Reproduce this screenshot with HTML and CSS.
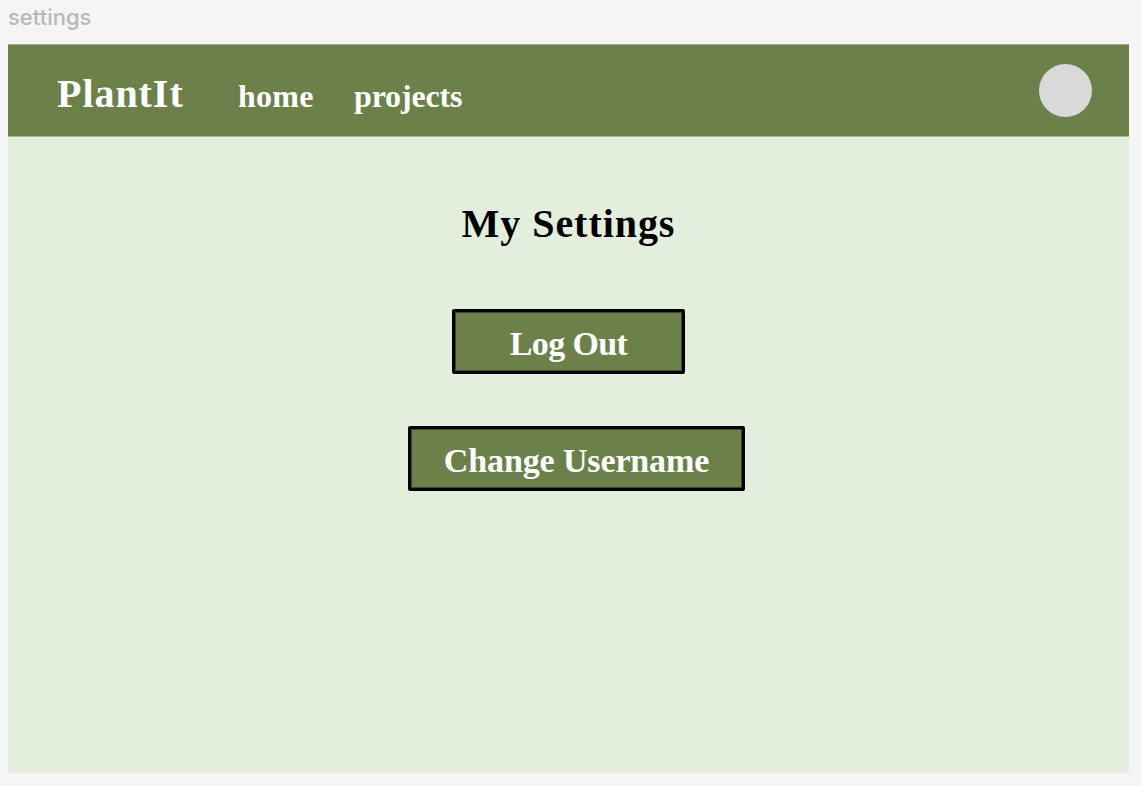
FILE: index.html
```
<!DOCTYPE html>
<html lang="en">
<head>
<meta charset="utf-8">
<title>PlantIt settings</title>
<link rel="stylesheet" href="styles.css">
</head>
<body>
<div class="frame-label">settings</div>
<div class="screen">
  <header class="navbar">
    <a class="brand">PlantIt</a>
    <nav class="links"><a class="home">home</a><a class="projects">projects</a></nav>
    <div class="avatar"></div>
  </header>
  <main class="content">
    <h1 class="title">My Settings</h1>
    <button class="button logout">Log Out</button>
    <button class="button username">Change Username</button>
  </main>
</div>
</body>
</html>
```
FILE: styles.css
```
* { box-sizing: border-box; }
body {
  margin: 0;
  height: 786px;
  padding: 0 13px 13px 8px;
  overflow: hidden;
  background: #f5f5f5;
  font-family: "Liberation Serif", serif;
  font-weight: 700;
}
.frame-label {
  height: 44px;
  padding-top: 4px;
  font: 500 22px/27px Inter, sans-serif;
  color: #b8b8b8;
}
.screen { height: 729px; background: #e3eedd; }
.navbar {
  display: flex;
  height: 93px;
  padding: 0 37px 0 49px;
  background: #6b8149;
  border-top: 1px solid #a0ad89;
  border-bottom: 1px solid #a7b893;
  color: #fff;
  white-space: nowrap;
}
.brand { width: 181px; padding-top: 26px; font-size: 40px; line-height: 46px; letter-spacing: 0.95px; }
.links { display: flex; flex: 1; padding-top: 32px; font-size: 32px; line-height: 38px; }
.home { width: 116px; letter-spacing: 0.25px; }
.projects { letter-spacing: -0.15px; }
.avatar { width: 53px; height: 53px; margin-top: 19px; border-radius: 50%; background: #d9d9d9; }
.content { display: flex; flex-direction: column; align-items: center; }
.title { margin: 64px 0 0; font-size: 40px; line-height: 46px; letter-spacing: 0.95px; color: #000; }
.button {
  height: 65px;
  padding: 5px 0 0;
  border: 3px solid #000;
  border-radius: 2px;
  background: #6b8149;
  box-shadow: inset 0 0 0 1px rgba(0, 0, 0, 0.45);
  color: #fff;
  font: inherit;
  font-size: 34px;
  line-height: 38px;
}
.logout { width: 233px; margin-top: 62px; letter-spacing: -0.6px; }
.username { width: 337px; margin: 52px 0 0 16px; padding-top: 4px; letter-spacing: -0.13px; }
```
